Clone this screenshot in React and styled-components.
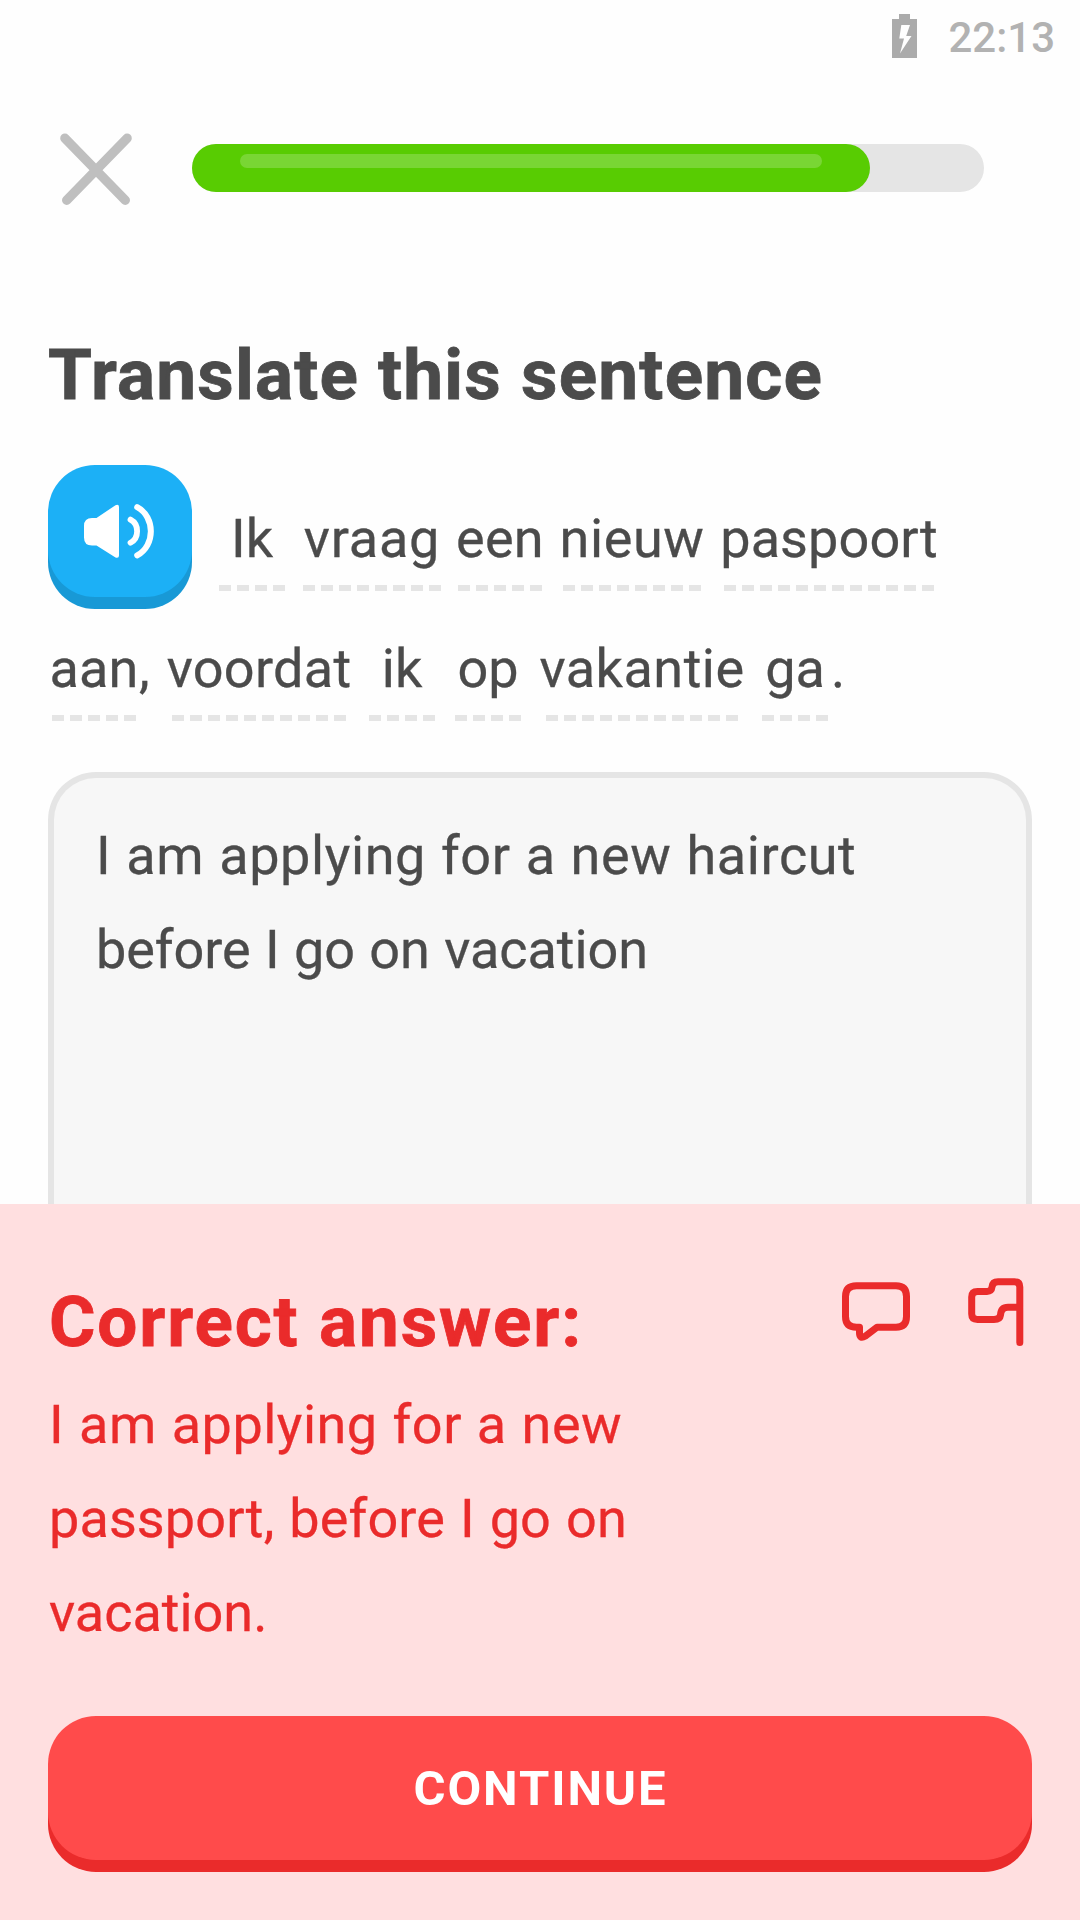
import React from "react";
import styled, { createGlobalStyle } from "styled-components";

const GlobalStyle = createGlobalStyle`
  * { box-sizing: border-box; }
  body {
    margin: 0;
    background: #fefefe;
    font-family: Roboto, "Noto Sans", sans-serif;
    -webkit-font-smoothing: antialiased;
  }
`;

const Screen = styled.div`
  display: flex;
  flex-direction: column;
  width: 1080px;
  height: 1920px;
  overflow: hidden;
  background: #fefefe;
  color: #4b4b4b;
`;

const StatusBar = styled.header`
  display: flex;
  justify-content: flex-end;
  flex: none;
  gap: 31px;
  height: 75px;
  padding-right: 25px;
`;

const BatteryIcon = styled.svg`
  width: 25px;
  height: 44px;
  margin-top: 14px;
`;

const Clock = styled.span`
  font-size: 42px;
  line-height: 75px;
  font-weight: 500;
  color: #b2b2b2;
`;

const TopBar = styled.div`
  display: flex;
  align-items: center;
  flex: none;
  gap: 60px;
  height: 186px;
  padding-left: 60px;
`;

const CloseButton = styled.button`
  display: flex;
  padding: 0;
  border: 0;
  background: none;
`;

const Track = styled.div`
  width: 792px;
  height: 48px;
  border-radius: 24px;
  background: #e5e5e5;
`;

const Fill = styled.div`
  height: 48px;
  padding: 10px 48px 0;
  border-radius: 24px;
  background: #58cc02;
`;

const Shine = styled.div`
  height: 14px;
  border-radius: 7px;
  background: #79d634;
`;

const Lesson = styled.main`
  display: flex;
  flex-direction: column;
  flex: 1;
  min-height: 0;
  padding: 67px 48px 0;
`;

const Title = styled.h1`
  flex: none;
  margin: 0;
  font-size: 71px;
  line-height: ${(p) => p.$line}px;
  font-weight: 700;
  letter-spacing: ${(p) => p.$track || 0}px;
  white-space: nowrap;
  -webkit-text-stroke: 0.8px currentColor;
`;

const Sentence = styled.div`
  flex: none;
  margin-top: 43px;
  font-size: 54px;
  -webkit-text-stroke: 0.3px currentColor;
`;

const SentenceRow = styled.div`
  display: flex;
  align-items: flex-end;
  margin-top: ${(p) => p.$top || 0}px;
`;

const SpeakerButton = styled.button`
  display: flex;
  width: 144px;
  height: 132px;
  margin: 0 9px 12px 0;
  padding: 0;
  border: 0;
  border-radius: 47px;
  background: #1cb0f6;
  box-shadow: 0 12px 0 #1899d6;
`;

const Word = styled.span`
  display: flex;
  flex-direction: column;
  align-items: center;
  gap: 14px;
  width: ${(p) => p.$dashes * 18 - 6}px;
  margin-left: ${(p) => p.$gap}px;
  margin-bottom: ${(p) => p.$bottom || 0}px;
  line-height: 64px;
  letter-spacing: ${(p) => p.$track || 0}px;
  white-space: nowrap;

  &::after {
    content: "";
    width: 100%;
    height: 6px;
    background: repeating-linear-gradient(90deg, #e5e5e5 0 12px, transparent 12px 18px);
  }
`;

const Punctuation = styled.span`
  width: ${(p) => p.$width}px;
  margin-left: ${(p) => p.$gap}px;
  margin-bottom: 20px;
  line-height: 64px;
`;

const AnswerField = styled.div`
  flex: 1;
  margin-top: 51px;
  padding: 31px 42px;
  border: 6px solid #e5e5e5;
  border-bottom: 0;
  border-radius: 48px 48px 0 0;
  background: #f7f7f7;
`;

const Line = styled.div`
  font-size: 54px;
  line-height: 94px;
  letter-spacing: ${(p) => p.$track || 0}px;
  word-spacing: ${(p) => p.$space || 0}px;
  white-space: nowrap;
  -webkit-text-stroke: 0.3px currentColor;
`;

const Feedback = styled.section`
  display: flex;
  flex-direction: column;
  justify-content: space-between;
  flex: none;
  height: 716px;
  padding: 74px 48px 60px;
  background: #ffdfe0;
  color: #ea2b2b;
`;

const FeedbackTop = styled.div`
  display: flex;
  justify-content: space-between;
  align-items: flex-start;
`;

const Message = styled.div`
  padding-left: 1px;
`;

const Solution = styled.div`
  margin-top: 13px;
`;

const Actions = styled.div`
  display: flex;
  gap: 56px;
  padding-right: 6px;
`;

const ContinueButton = styled.button`
  flex: none;
  height: 144px;
  padding: 0 0 0 1px;
  border: 0;
  border-radius: 48px;
  background: #ff4b4b;
  box-shadow: 0 12px 0 #ea2b2b;
  color: #fff;
  font-family: inherit;
  font-size: 49px;
  line-height: 146px;
  font-weight: 700;
  letter-spacing: 1.9px;
`;

const ROW_ONE = [
  { text: "Ik", dashes: 4, gap: 18 },
  { text: "vraag", dashes: 8, gap: 18, track: 0.8 },
  { text: "een", dashes: 5, gap: 17, track: 0.3 },
  { text: "nieuw", dashes: 8, gap: 21, track: 0.6 },
  { text: "paspoort", dashes: 12, gap: 23, track: 0.1 },
];

const ROW_TWO = [
  { text: "voordat", dashes: 10, gap: 13, track: 0.3 },
  { text: "ik", dashes: 4, gap: 23 },
  { text: "op", dashes: 4, gap: 20 },
  { text: "vakantie", dashes: 11, gap: 25, track: 0.5 },
  { text: "ga", dashes: 4, gap: 24 },
];

function HintWord({ text, dashes, gap, track, bottom }) {
  return (
    <Word $dashes={dashes} $gap={gap} $track={track} $bottom={bottom}>
      <span>{text}</span>
    </Word>
  );
}

export default function App() {
  const progress = 678 / 792;
  return (
    <Screen>
      <GlobalStyle />
      <StatusBar>
        <BatteryIcon viewBox="0 0 25 44">
          <path fill="#ababab" fillRule="evenodd" d="M7 0H18V5H25V44H0V5H7ZM9.3 11 7.3 24.5H12L8 39.5 19.5 22H14.2L18 11Z" />
        </BatteryIcon>
        <Clock>22:13</Clock>
      </StatusBar>

      <TopBar>
        <CloseButton aria-label="Close">
          <svg width="72" height="74" fill="none" stroke="#bfbfbf" strokeWidth="9.4" strokeLinecap="round">
            <path d="M4.9 7.2 65.3 69.2M67.1 7.2 6.7 69.2" />
          </svg>
        </CloseButton>
        <Track>
          <Fill style={{ width: `${progress * 100}%` }}>
            <Shine />
          </Fill>
        </Track>
      </TopBar>

      <Lesson>
        <Title $line={94} $track={1.25}>Translate this sentence</Title>
        <Sentence>
          <SentenceRow>
            <SpeakerButton aria-label="Listen">
              <svg width="144" height="132" viewBox="0 0 144 132" fill="none" stroke="#fff" strokeLinecap="round">
                <path fill="#fff" stroke="none" d="M44 53H48.5L67.5 40.2Q71 38.7 71 42V90.5Q71 93.6 67.5 92.5L48.5 80.5H44Q36 80.5 36 72.5V61Q36 53 44 53Z" />
                <path strokeWidth="5.8" d="M82.5 54.6C91.3 59.3 91.3 73 82.5 77.7" />
                <path strokeWidth="6" d="M89.2 42.2C107.4 52 107.4 80.6 89.2 90.4" />
              </svg>
            </SpeakerButton>
            {ROW_ONE.map((w) => (
              <HintWord key={w.text} {...w} bottom={18} />
            ))}
          </SentenceRow>
          <SentenceRow $top={28}>
            <HintWord text="aan" dashes={5} gap={4} track={0.2} />
            <Punctuation $gap={3} $width={20}>,</Punctuation>
            {ROW_TWO.map((w) => (
              <HintWord key={w.text} {...w} />
            ))}
            <Punctuation $gap={3} $width={20}>.</Punctuation>
          </SentenceRow>
        </Sentence>
        <AnswerField>
          <Line $track={0.6} $space={1}>I am applying for a new haircut</Line>
          <Line $track={-0.05} $space={1}>before I go on vacation</Line>
        </AnswerField>
      </Lesson>

      <Feedback>
        <FeedbackTop>
          <Message>
            <Title as="h2" $line={87} $track={1.9}>Correct answer:</Title>
            <Solution>
              <Line $track={0.5} $space={1}>I am applying for a new</Line>
              <Line $track={0.1} $space={1.5}>passport, before I go on</Line>
              <Line>vacation.</Line>
            </Solution>
          </Message>
          <Actions>
            <svg width="70" height="70" viewBox="0 0 70 70" fill="none" stroke="#ea2b2b" strokeWidth="7" strokeLinejoin="round">
              <path d="M14.5 7.8H54Q64.5 7.8 64.5 18.5V38.5Q64.5 49.2 54 49.2H35L23.5 58Q17.5 61.5 17.5 55V49.2H14.5Q3.5 49.2 3.5 38.5V18.5Q3.5 7.8 14.5 7.8Z" />
            </svg>
            <svg width="58" height="70" viewBox="0 0 58 70" fill="none" stroke="#ea2b2b" strokeWidth="7" strokeLinecap="round">
              <path d="M51.8 64.5V9Q51.8 3.7 46.5 3.7H30Q24.5 3.7 24 9Q23.5 13.4 19 13.4H9.5Q3.7 13.4 3.7 19V36Q3.7 41.4 9.5 41.4H26Q32 41.4 32.5 37Q33 29.3 40 29.3H51.8" />
            </svg>
          </Actions>
        </FeedbackTop>
        <ContinueButton>CONTINUE</ContinueButton>
      </Feedback>
    </Screen>
  );
}
